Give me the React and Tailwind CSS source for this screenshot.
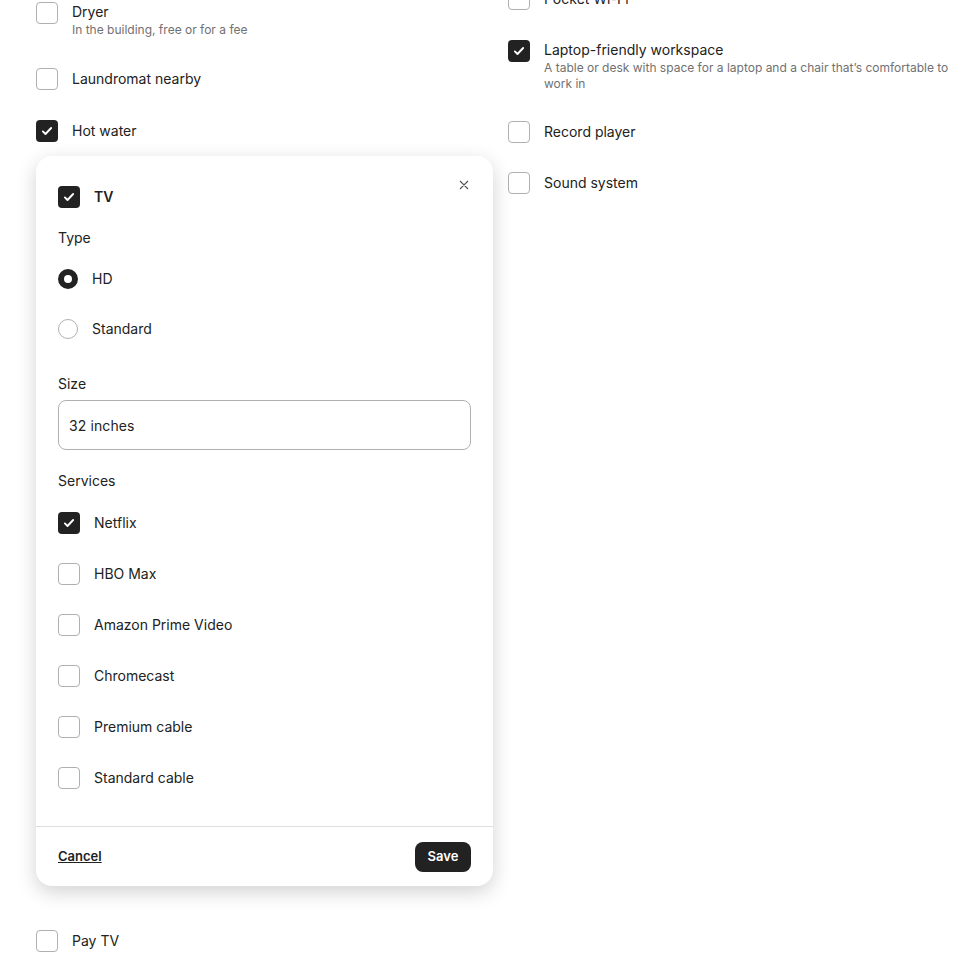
import React from 'react';

const font = { fontFamily: 'Inter, "Noto Sans", sans-serif' };

const CheckIcon = () => (
  <svg viewBox="0 0 32 32" className="w-[12px] h-[12px]" fill="none" stroke="white" strokeWidth="5" strokeLinecap="round" strokeLinejoin="round">
    <path d="M5 17l7 7L27 8" />
  </svg>
);

const Box = ({ checked }) =>
  checked ? (
    <div className="w-[22px] h-[22px] shrink-0 rounded-[4px] bg-[#222222] flex items-center justify-center">
      <CheckIcon />
    </div>
  ) : (
    <div className="w-[22px] h-[22px] shrink-0 rounded-[4px] border border-[#b0b0b0] bg-white" />
  );

const Amenity = ({ label, note, checked }) => (
  <div className="flex items-start gap-[14px]">
    <Box checked={checked} />
    {note ? (
      <div className="flex flex-col">
        <span className="text-[14px] leading-[20px] text-[#222222]">{label}</span>
        <span className="text-[12px] leading-[16px] text-[#717171]">{note}</span>
      </div>
    ) : (
      <span className="text-[14px] leading-[22px] text-[#222222]">{label}</span>
    )}
  </div>
);

const Radio = ({ label, selected }) => (
  <div className="flex items-center gap-[14px]">
    {selected ? (
      <div className="w-[20px] h-[20px] rounded-full border-[6px] border-[#222222] bg-white shrink-0" />
    ) : (
      <div className="w-[20px] h-[20px] rounded-full border border-[#b0b0b0] bg-white shrink-0" />
    )}
    <span className="text-[14px] leading-[20px] text-[#222222]">{label}</span>
  </div>
);

const ServiceRow = ({ label, checked }) => (
  <div className="flex items-center gap-[14px]">
    <Box checked={checked} />
    <span className="text-[14px] leading-[22px] text-[#222222]">{label}</span>
  </div>
);

const TvPanel = () => {
  const services = [
    { label: 'Netflix', checked: true },
    { label: 'HBO Max' },
    { label: 'Amazon Prime Video' },
    { label: 'Chromecast' },
    { label: 'Premium cable' },
    { label: 'Standard cable' },
  ];

  return (
    <div className="relative w-[457px] bg-white rounded-[16px] shadow-[0_6px_20px_rgba(0,0,0,0.18)] mt-[14px]">
      <button className="absolute top-[23px] right-[23px] w-[12px] h-[12px] flex items-center justify-center">
        <svg viewBox="0 0 32 32" className="w-[12px] h-[12px]" fill="none" stroke="#555" strokeWidth="3" strokeLinecap="round">
          <path d="M6 6l20 20M26 6L6 26" />
        </svg>
      </button>

      <div className="px-[22px] pt-[30px] pb-[37px]">
        <div className="flex items-center gap-[14px]">
          <Box checked />
          <span className="text-[14px] leading-[22px] font-semibold text-[#222222]">TV</span>
        </div>

        <div className="mt-[20px] text-[14px] leading-[20px] text-[#222222]">Type</div>
        <div className="mt-[21px] flex flex-col gap-[30px]">
          <Radio label="HD" selected />
          <Radio label="Standard" />
        </div>

        <div className="mt-[35px] text-[14px] leading-[20px] text-[#222222]">Size</div>
        <div className="mt-[6px] h-[50px] rounded-[8px] border border-[#b0b0b0] flex items-center px-[10px] text-[14px] text-[#222222] tracking-[0.1px]">
          32 inches
        </div>

        <div className="mt-[21px] text-[14px] leading-[20px] text-[#222222]">Services</div>
        <div className="mt-[21px] flex flex-col gap-[29px]">
          {services.map((s) => (
            <ServiceRow key={s.label} {...s} />
          ))}
        </div>
      </div>

      <div className="border-t border-[#dddddd] h-[60px] px-[22px] flex items-center justify-between">
        <span className="text-[13px] font-semibold text-[#222222] underline">Cancel</span>
        <button className="h-[30px] w-[56px] rounded-[8px] bg-[#222222] text-white text-[13px] font-semibold">
          Save
        </button>
      </div>
    </div>
  );
};

export default function App() {
  return (
    <div className="min-h-screen bg-white overflow-hidden" style={font}>
      <div className="flex pl-[36px] pr-[12px] gap-[15px]">
        <div className="w-[457px] shrink-0 flex flex-col pt-[2px]">
          <div className="flex flex-col gap-[30px]">
            <Amenity label="Dryer" note="In the building, free or for a fee" />
            <Amenity label="Laundromat nearby" />
            <Amenity label="Hot water" checked />
          </div>
          <TvPanel />
          <div className="mt-[44px]">
            <Amenity label="Pay TV" />
          </div>
        </div>

        <div className="flex-1 flex flex-col -mt-[12px]">
          <Amenity label="Pocket Wi-Fi" />
          <div className="mt-[30px]">
            <Amenity
              label="Laptop-friendly workspace"
              note="A table or desk with space for a laptop and a chair that’s comfortable to work in"
              checked
            />
          </div>
          <div className="mt-[29px] flex flex-col gap-[29px]">
            <Amenity label="Record player" />
            <Amenity label="Sound system" />
          </div>
        </div>
      </div>
    </div>
  );
}
